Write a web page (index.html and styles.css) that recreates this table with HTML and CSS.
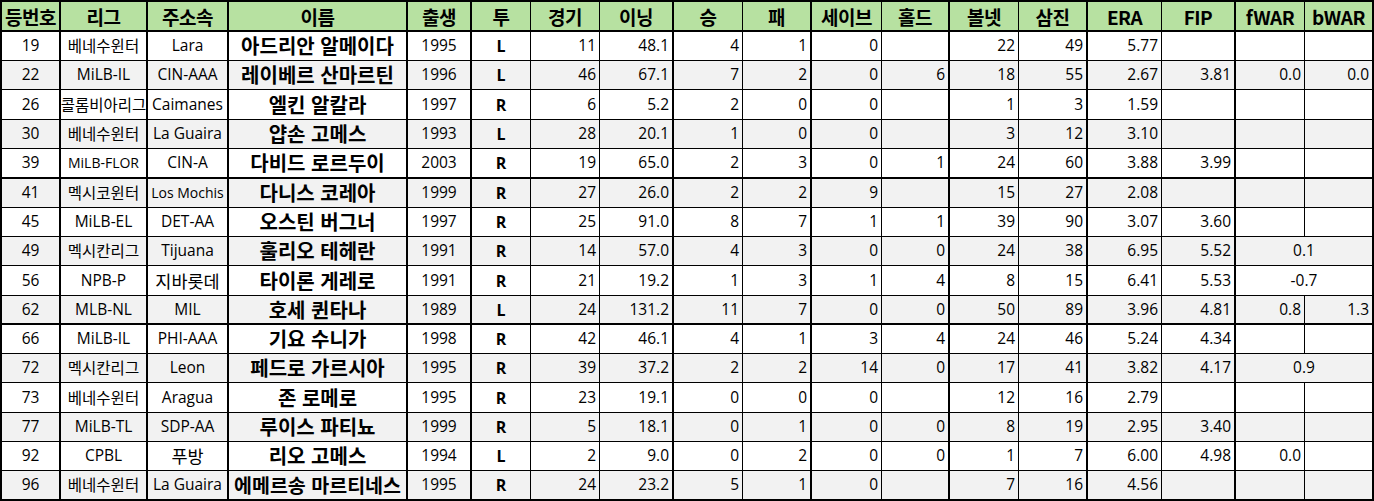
FILE: index.html
```html
<!DOCTYPE html>
<html lang="ko">
<head>
<meta charset="utf-8">
<title>투수 명단</title>
<link rel="stylesheet" href="styles.css">
</head>
<body>
<div class="sheet">
  <div class="row head">
    <div class="c">등번호</div><div class="c">리그</div><div class="c">주소속</div><div class="c">이름</div><div class="c">출생</div><div class="c">투</div><div class="c">경기</div><div class="c">이닝</div><div class="c">승</div><div class="c">패</div><div class="c">세이브</div><div class="c">홀드</div><div class="c">볼넷</div><div class="c">삼진</div><div class="c">ERA</div><div class="c">FIP</div><div class="c">fWAR</div><div class="c">bWAR</div>
  </div>

  <div class="row h29">
    <div class="c">19</div><div class="c ks">베네수윈터</div><div class="c">Lara</div><div class="c nm">아드리안 알메이다</div><div class="c">1995</div><div class="c b">L</div><div class="c r">11</div><div class="c r">48.1</div><div class="c r">4</div><div class="c r">1</div><div class="c r">0</div><div class="c r"></div><div class="c r">22</div><div class="c r">49</div><div class="c r">5.77</div><div class="c r"></div><div class="c r"></div><div class="c r"></div>
  </div>
  <div class="row h29 alt">
    <div class="c">22</div><div class="c">MiLB-IL</div><div class="c">CIN-AAA</div><div class="c nm">레이베르 산마르틴</div><div class="c">1996</div><div class="c b">L</div><div class="c r">46</div><div class="c r">67.1</div><div class="c r">7</div><div class="c r">2</div><div class="c r">0</div><div class="c r">6</div><div class="c r">18</div><div class="c r">55</div><div class="c r">2.67</div><div class="c r">3.81</div><div class="c r">0.0</div><div class="c r">0.0</div>
  </div>
  <div class="row h30">
    <div class="c">26</div><div class="c ks">콜롬비아리그</div><div class="c">Caimanes</div><div class="c nm">엘킨 알칼라</div><div class="c">1997</div><div class="c b">R</div><div class="c r">6</div><div class="c r">5.2</div><div class="c r">2</div><div class="c r">0</div><div class="c r">0</div><div class="c r"></div><div class="c r">1</div><div class="c r">3</div><div class="c r">1.59</div><div class="c r"></div><div class="c r"></div><div class="c r"></div>
  </div>
  <div class="row h29 alt">
    <div class="c">30</div><div class="c ks">베네수윈터</div><div class="c">La Guaira</div><div class="c nm">얍손 고메스</div><div class="c">1993</div><div class="c b">L</div><div class="c r">28</div><div class="c r">20.1</div><div class="c r">1</div><div class="c r">0</div><div class="c r">0</div><div class="c r"></div><div class="c r">3</div><div class="c r">12</div><div class="c r">3.10</div><div class="c r"></div><div class="c r"></div><div class="c r"></div>
  </div>
  <div class="row h30 sep">
    <div class="c">39</div><div class="c sm">MiLB-FLOR</div><div class="c">CIN-A</div><div class="c nm">다비드 로르두이</div><div class="c">2003</div><div class="c b">R</div><div class="c r">19</div><div class="c r">65.0</div><div class="c r">2</div><div class="c r">3</div><div class="c r">0</div><div class="c r">1</div><div class="c r">24</div><div class="c r">60</div><div class="c r">3.88</div><div class="c r">3.99</div><div class="c r"></div><div class="c r"></div>
  </div>
  <div class="row h29 alt">
    <div class="c">41</div><div class="c ks">멕시코윈터</div><div class="c sm">Los Mochis</div><div class="c nm">다니스 코레아</div><div class="c">1999</div><div class="c b">R</div><div class="c r">27</div><div class="c r">26.0</div><div class="c r">2</div><div class="c r">2</div><div class="c r">9</div><div class="c r"></div><div class="c r">15</div><div class="c r">27</div><div class="c r">2.08</div><div class="c r"></div><div class="c r"></div><div class="c r"></div>
  </div>
  <div class="row h29">
    <div class="c">45</div><div class="c">MiLB-EL</div><div class="c">DET-AA</div><div class="c nm">오스틴 버그너</div><div class="c">1997</div><div class="c b">R</div><div class="c r">25</div><div class="c r">91.0</div><div class="c r">8</div><div class="c r">7</div><div class="c r">1</div><div class="c r">1</div><div class="c r">39</div><div class="c r">90</div><div class="c r">3.07</div><div class="c r">3.60</div><div class="c r"></div><div class="c r"></div>
  </div>
  <div class="row h29 alt">
    <div class="c">49</div><div class="c ks">멕시칸리그</div><div class="c">Tijuana</div><div class="c nm">훌리오 테헤란</div><div class="c">1991</div><div class="c b">R</div><div class="c r">14</div><div class="c r">57.0</div><div class="c r">4</div><div class="c r">3</div><div class="c r">0</div><div class="c r">0</div><div class="c r">24</div><div class="c r">38</div><div class="c r">6.95</div><div class="c r">5.52</div><div class="c m">0.1</div>
  </div>
  <div class="row h30">
    <div class="c">56</div><div class="c">NPB-P</div><div class="c ko">지바롯데</div><div class="c nm">타이론 게레로</div><div class="c">1991</div><div class="c b">R</div><div class="c r">21</div><div class="c r">19.2</div><div class="c r">1</div><div class="c r">3</div><div class="c r">1</div><div class="c r">4</div><div class="c r">8</div><div class="c r">15</div><div class="c r">6.41</div><div class="c r">5.53</div><div class="c m">-0.7</div>
  </div>
  <div class="row h29 alt sep">
    <div class="c">62</div><div class="c">MLB-NL</div><div class="c">MIL</div><div class="c nm">호세 퀸타나</div><div class="c">1989</div><div class="c b">L</div><div class="c r">24</div><div class="c r">131.2</div><div class="c r">11</div><div class="c r">7</div><div class="c r">0</div><div class="c r">0</div><div class="c r">50</div><div class="c r">89</div><div class="c r">3.96</div><div class="c r">4.81</div><div class="c r">0.8</div><div class="c r">1.3</div>
  </div>
  <div class="row h29">
    <div class="c">66</div><div class="c">MiLB-IL</div><div class="c">PHI-AAA</div><div class="c nm">기요 수니가</div><div class="c">1998</div><div class="c b">R</div><div class="c r">42</div><div class="c r">46.1</div><div class="c r">4</div><div class="c r">1</div><div class="c r">3</div><div class="c r">4</div><div class="c r">24</div><div class="c r">46</div><div class="c r">5.24</div><div class="c r">4.34</div><div class="c r"></div><div class="c r"></div>
  </div>
  <div class="row h29 alt">
    <div class="c">72</div><div class="c ks">멕시칸리그</div><div class="c">Leon</div><div class="c nm">페드로 가르시아</div><div class="c">1995</div><div class="c b">R</div><div class="c r">39</div><div class="c r">37.2</div><div class="c r">2</div><div class="c r">2</div><div class="c r">14</div><div class="c r">0</div><div class="c r">17</div><div class="c r">41</div><div class="c r">3.82</div><div class="c r">4.17</div><div class="c m">0.9</div>
  </div>
  <div class="row h30">
    <div class="c">73</div><div class="c ks">베네수윈터</div><div class="c">Aragua</div><div class="c nm">존 로메로</div><div class="c">1995</div><div class="c b">R</div><div class="c r">23</div><div class="c r">19.1</div><div class="c r">0</div><div class="c r">0</div><div class="c r">0</div><div class="c r"></div><div class="c r">12</div><div class="c r">16</div><div class="c r">2.79</div><div class="c r"></div><div class="c r"></div><div class="c r"></div>
  </div>
  <div class="row h29 alt">
    <div class="c">77</div><div class="c">MiLB-TL</div><div class="c">SDP-AA</div><div class="c nm">루이스 파티뇨</div><div class="c">1999</div><div class="c b">R</div><div class="c r">5</div><div class="c r">18.1</div><div class="c r">0</div><div class="c r">1</div><div class="c r">0</div><div class="c r">0</div><div class="c r">8</div><div class="c r">19</div><div class="c r">2.95</div><div class="c r">3.40</div><div class="c r"></div><div class="c r"></div>
  </div>
  <div class="row h29">
    <div class="c">92</div><div class="c">CPBL</div><div class="c ko">푸방</div><div class="c nm">리오 고메스</div><div class="c">1994</div><div class="c b">L</div><div class="c r">2</div><div class="c r">9.0</div><div class="c r">0</div><div class="c r">2</div><div class="c r">0</div><div class="c r">0</div><div class="c r">1</div><div class="c r">7</div><div class="c r">6.00</div><div class="c r">4.98</div><div class="c r">0.0</div><div class="c r"></div>
  </div>
  <div class="row h30 alt last">
    <div class="c">96</div><div class="c ks">베네수윈터</div><div class="c">La Guaira</div><div class="c nm long">에메르송 마르티네스</div><div class="c">1995</div><div class="c b">R</div><div class="c r">24</div><div class="c r">23.2</div><div class="c r">5</div><div class="c r">1</div><div class="c r">0</div><div class="c r"></div><div class="c r">7</div><div class="c r">16</div><div class="c r">4.56</div><div class="c r"></div><div class="c r"></div><div class="c r"></div>
  </div>
</div>
</body>
</html>
```

FILE: styles.css
```css
html, body {
  margin: 0;
  padding: 0;
  background: #ffffff;
}

.sheet {
  width: 1374px;
  box-sizing: border-box;
  border-left: 2px solid #000;
  border-top: 2px solid #000;
  font-family: "Open Sans", "Noto Sans CJK KR", sans-serif;
  font-size: 15.5px;
  color: #000;
}

.row {
  display: grid;
  grid-template-columns: 59px 87px 81px 179px 64px 59px 69px 74px 69px 69px 70px 68px 69px 69px 74px 74px 69px 69px;
  box-sizing: border-box;
  background: #ffffff;
}

.row.alt { background: #f2f2f2; }

.row.head {
  height: 30px;
  background: #b7e1a1;
  font-family: "Noto Sans CJK KR", sans-serif;
  font-weight: 700;
  font-size: 19px;
}

.row.h29 { height: 29px; }
.row.h30 { height: 30px; }

.c {
  box-sizing: border-box;
  display: flex;
  align-items: center;
  justify-content: center;
  border-right: 1px solid #000;
  border-bottom: 1px solid #000;
  white-space: nowrap;
  overflow: hidden;
  line-height: 1;
}

.head .c { border-bottom-width: 2px; letter-spacing: -0.5px; }
.sep .c, .last .c { border-bottom-width: 2px; }

.c:nth-child(1),
.c:nth-child(2),
.c:nth-child(3),
.c:nth-child(4),
.c:nth-child(5),
.c:nth-child(8),
.c:nth-child(10),
.c:nth-child(12),
.c:nth-child(14),
.c:nth-child(16),
.c:nth-child(18) { border-right-width: 2px; }

.c.r {
  justify-content: flex-end;
  padding-right: 3px;
}

.c.m {
  grid-column: span 2;
  border-right-width: 2px;
}

.c.sm { font-size: 14px; }

.c.ks {
  font-family: "Noto Sans CJK KR", sans-serif;
  font-size: 15.5px;
}

.c.ko {
  font-family: "Noto Sans CJK KR", sans-serif;
  font-size: 17.5px;
}

.c.b { font-weight: 700; font-size: 16px; }

.c.nm {
  font-family: "Noto Sans CJK KR", sans-serif;
  font-weight: 700;
  font-size: 20px;
}

.c.nm.long { font-size: 19.5px; }
```
